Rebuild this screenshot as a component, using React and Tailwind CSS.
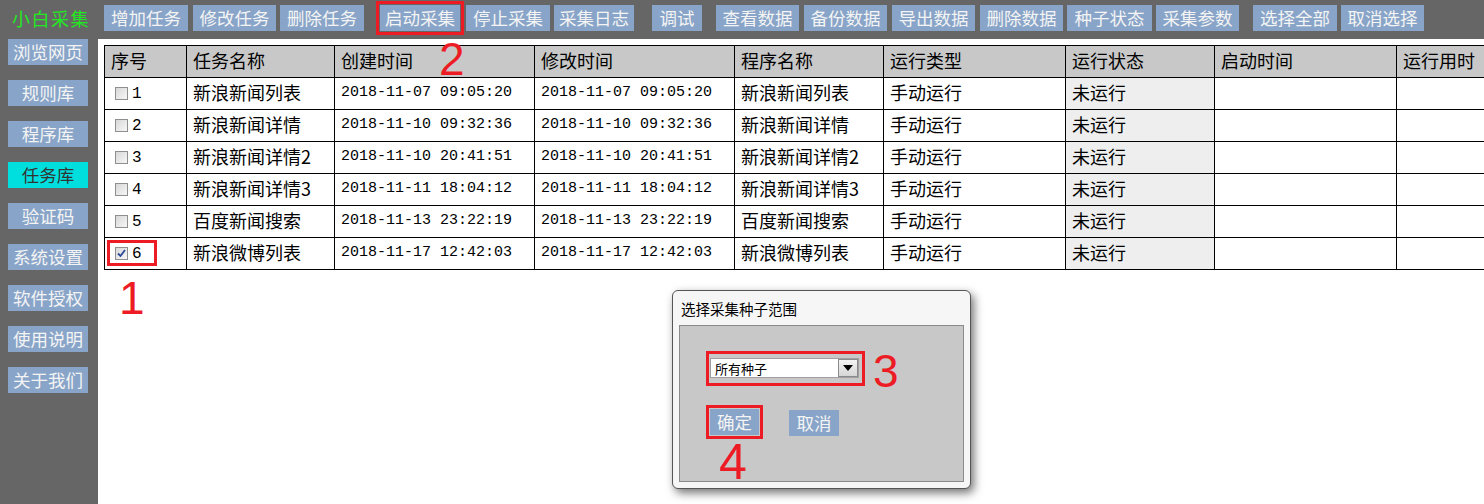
// 小白采集 — 任务库页面，启动采集弹窗

const TOP_BUTTONS = [
  { label: '增加任务', cls: 'w-[84px]' },
  { label: '修改任务', cls: 'ml-[5px] w-[83px]' },
  { label: '删除任务', cls: 'ml-[4px] w-[84px]' },
  { label: '启动采集', cls: 'ml-[16px] w-[80px] outline-[3px] outline-solid outline-[#ed1c24] outline-offset-[1px]' },
  { label: '停止采集', cls: 'ml-[6px] w-[84px]' },
  { label: '采集日志', cls: 'ml-[4px] w-[80px]' },
  { label: '调试', cls: 'ml-[18px] w-[50px]' },
  { label: '查看数据', cls: 'ml-[14px] w-[83px]' },
  { label: '备份数据', cls: 'ml-[5px] w-[83px]' },
  { label: '导出数据', cls: 'ml-[5px] w-[83px]' },
  { label: '删除数据', cls: 'ml-[5px] w-[83px]' },
  { label: '种子状态', cls: 'ml-[4px] w-[85px]' },
  { label: '采集参数', cls: 'ml-[4px] w-[83px]' },
  { label: '选择全部', cls: 'ml-[14px] w-[84px]' },
  { label: '取消选择', cls: 'ml-[4px] w-[83px]' },
]

const SIDE_MENU = ['浏览网页', '规则库', '程序库', '任务库', '验证码', '系统设置', '软件授权', '使用说明', '关于我们']

const COLUMNS = [
  { label: '序号', w: 'w-[82px]' },
  { label: '任务名称', w: 'w-[148px]' },
  { label: '创建时间', w: 'w-[200px]' },
  { label: '修改时间', w: 'w-[200px]' },
  { label: '程序名称', w: 'w-[149px]' },
  { label: '运行类型', w: 'w-[182px]' },
  { label: '运行状态', w: 'w-[149px]' },
  { label: '启动时间', w: 'w-[182px]' },
  { label: '运行用时', w: 'w-[150px]' },
]

const TASKS = [
  { id: 1, name: '新浪新闻列表', time: '2018-11-07 09:05:20', prog: '新浪新闻列表' },
  { id: 2, name: '新浪新闻详情', time: '2018-11-10 09:32:36', prog: '新浪新闻详情' },
  { id: 3, name: '新浪新闻详情2', time: '2018-11-10 20:41:51', prog: '新浪新闻详情2' },
  { id: 4, name: '新浪新闻详情3', time: '2018-11-11 18:04:12', prog: '新浪新闻详情3' },
  { id: 5, name: '百度新闻搜索', time: '2018-11-13 23:22:19', prog: '百度新闻搜索' },
  { id: 6, name: '新浪微博列表', time: '2018-11-17 12:42:03', prog: '新浪微博列表', checked: true },
]

function CheckBox({ checked }) {
  return (
    <span className="w-[13px] h-[13px] border border-[#8f8f8f] bg-gradient-to-br from-[#d8d8d8] to-[#f7f7f7] flex items-center justify-center shrink-0">
      {checked && (
        <svg width="9" height="9" viewBox="0 0 9 9">
          <path d="M1 4.5 L3.5 7 L8 1" fill="none" stroke="#2c4a9a" strokeWidth="1.8" />
        </svg>
      )}
    </span>
  )
}

function Mark({ n, cls }) {
  return (
    <span className={`absolute leading-none text-[#ed1c24] font-['Liberation_Sans',sans-serif] ${cls}`}>{n}</span>
  )
}

export default function App() {
  return (
    <div className="relative w-[1484px] h-[504px] bg-[#666666] flex flex-col overflow-hidden font-['Noto_Sans_CJK_SC',sans-serif]">
      {/* 顶部工具栏 */}
      <div className="h-[39px] flex items-start pt-[5px] shrink-0">
        <div className="w-[104px] pl-[12px] h-[26px] flex items-center text-[18px] tracking-[1.5px] text-[#22e822]">小白采集</div>
        {TOP_BUTTONS.map(b => (
          <div key={b.label}
            className={`h-[26px] bg-[#88a4c8] text-[#f4f4f4] text-[17.5px] flex items-center justify-center whitespace-nowrap ${b.cls}`}>
            {b.label}
          </div>
        ))}
      </div>

      <div className="flex flex-1 min-h-0">
        {/* 左侧菜单 */}
        <div className="w-[98px] shrink-0 pl-[8px] flex flex-col gap-[15px]">
          {SIDE_MENU.map(m => (
            <div key={m}
              className={`w-[80px] h-[26px] flex items-center justify-center text-[17.5px] ${
                m === '任务库' ? 'bg-[#00dede] text-[#333333]' : 'bg-[#88a4c8] text-[#f4f4f4]'
              }`}>
              {m}
            </div>
          ))}
        </div>

        {/* 任务列表 */}
        <div className="flex-1 bg-white overflow-hidden pl-[6px] pt-[6px]">
          <table className="border-collapse table-fixed w-[1442px] text-[18px] text-black">
            <thead>
              <tr className="bg-[#c8c8c8]">
                {COLUMNS.map(c => (
                  <th key={c.label} className={`${c.w} h-[32px] border border-black text-left font-normal pl-[6px] pt-0 pb-[2px]`}>{c.label}</th>
                ))}
              </tr>
            </thead>
            <tbody>
              {TASKS.map(t => (
                <tr key={t.id}>
                  <td className="h-[32px] border border-black pl-[10px] py-0">
                    <div className="flex items-center gap-[4px]">
                      <CheckBox checked={t.checked} />
                      <span className="font-['Liberation_Mono',monospace] text-[16px]">{t.id}</span>
                    </div>
                  </td>
                  <td className="border border-black pl-[6px] pt-0 pb-[3px]">{t.name}</td>
                  <td className="border border-black pl-[6px] py-0 font-['Liberation_Mono',monospace] text-[15px]">{t.time}</td>
                  <td className="border border-black pl-[6px] py-0 font-['Liberation_Mono',monospace] text-[15px]">{t.time}</td>
                  <td className="border border-black pl-[6px] pt-0 pb-[3px]">{t.prog}</td>
                  <td className="border border-black pl-[6px] pt-0 pb-[3px]">手动运行</td>
                  <td className="border border-black pl-[6px] pt-0 pb-[3px] bg-[#eeeeee]">未运行</td>
                  <td className="border border-black py-0"></td>
                  <td className="border border-black py-0"></td>
                </tr>
              ))}
            </tbody>
          </table>
        </div>
      </div>

      {/* 选择采集种子范围 弹窗 */}
      <div className="absolute left-[672px] top-[290px] w-[299px] h-[199px] rounded-[6px] border border-[#555555] bg-[#f6f6f6] shadow-[3px_4px_10px_rgba(0,0,0,0.55)] flex flex-col px-[6px] pb-[6px]">
        <div className="h-[34px] flex items-center pl-[2px] pt-[2px] text-[14.5px] text-black">选择采集种子范围</div>
        <div className="flex-1 bg-[#c8c8c8] border border-[#8a8a8a] pl-[30px] pt-[32px]">
          <div className="w-[149px] h-[20px] bg-white border border-[#a0a0a0] flex items-center">
            <span className="flex-1 pl-[4px] text-[13px] text-black leading-none">所有种子</span>
            <span className="w-[20px] h-[18px] border border-[#8a8a8a] bg-gradient-to-b from-[#f4f4f4] to-[#d6d6d6] flex items-center justify-center">
              <svg width="10" height="6" viewBox="0 0 10 6"><path d="M0 0 H10 L5 6 Z" fill="#000" /></svg>
            </span>
          </div>
          <div className="flex mt-[31px]">
            <div className="w-[49px] h-[26px] bg-[#88a4c8] text-[#f4f4f4] text-[17.5px] flex items-center justify-center outline-[3px] outline-solid outline-[#ed1c24] outline-offset-[1px]">确定</div>
            <div className="ml-[30px] mt-[1px] w-[50px] h-[26px] bg-[#88a4c8] text-[#f4f4f4] text-[17.5px] flex items-center justify-center">取消</div>
          </div>
        </div>
      </div>

      {/* 标注 */}
      <div className="absolute left-[107px] top-[240px] w-[50px] h-[26px] border-[3px] border-[#ed1c24]" />
      <div className="absolute left-[706px] top-[351px] w-[159px] h-[35px] border-[3px] border-[#ed1c24]" />
      <Mark n="1" cls="left-[119px] top-[275px] text-[46px]" />
      <Mark n="2" cls="left-[439px] top-[36px] text-[46px]" />
      <Mark n="3" cls="left-[873px] top-[348px] text-[46px]" />
      <Mark n="4" cls="left-[719px] top-[437px] text-[50px]" />
    </div>
  )
}
